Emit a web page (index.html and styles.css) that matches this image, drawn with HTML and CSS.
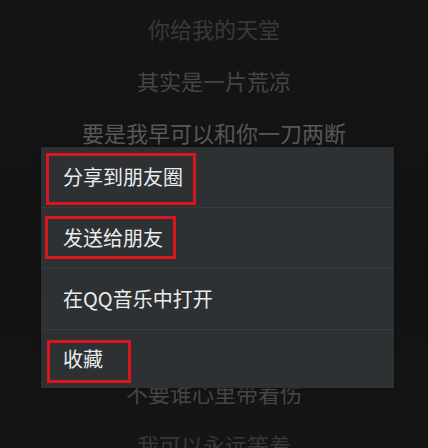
FILE: index.html
```html
<!DOCTYPE html>
<html lang="zh-CN">
<head>
<meta charset="utf-8">
<title>歌词</title>
<link rel="stylesheet" href="styles.css">
</head>
<body>
<div class="screen">
  <div class="lyrics">
    <p class="line l1">你给我的天堂</p>
    <p class="line l2">其实是一片荒凉</p>
    <p class="line l3">要是我早可以和你一刀两断</p>
    <div class="gap"></div>
    <p class="line l4">不要谁心里带着伤</p>
    <p class="line l5">我可以永远等着</p>
  </div>
  <div class="menu">
    <div class="item">分享到朋友圈<span class="mark mark-1"></span></div>
    <div class="item">发送给朋友<span class="mark mark-2"></span></div>
    <div class="item">在QQ音乐中打开</div>
    <div class="item last">收藏<span class="mark mark-4"></span></div>
  </div>
</div>
</body>
</html>
```
FILE: styles.css
```css
html, body {
  margin: 0;
  padding: 0;
}
body {
  width: 428px;
  height: 448px;
  overflow: hidden;
  background: #131313;
  font-family: "Noto Sans CJK SC", "Noto Sans", sans-serif;
}
.screen {
  position: relative;
  width: 428px;
  height: 448px;
  overflow: hidden;
  background: linear-gradient(180deg, #151515 0%, #121212 60%, #151514 100%);
}
.lyrics {
  padding-top: 2px;
  text-align: center;
}
.gap {
  height: 208px;
}
.line {
  margin: 0;
  height: 52px;
  line-height: 52px;
  font-size: 22px;
  color: #4a4a4a;
  white-space: nowrap;
}
.l1 { color: #393939; }
.l2 { color: #454545; }
.l3 { color: #575757; }
.l4 { color: #464646; }
.l5 { color: #383838; }

.menu {
  position: absolute;
  left: 41px;
  top: 147px;
  width: 353px;
  background: #2e3133;
  box-shadow: 0 0 2px rgba(0,0,0,0.6);
}
.item {
  position: relative;
  height: 60px;
  line-height: 60px;
  padding-left: 22px;
  font-size: 20px;
  color: #ebebeb;
  border-top: 1px solid #383b3d;
}
.item:first-child {
  border-top: none;
}
.item.last {
  height: 58px;
  line-height: 58px;
}
.mark {
  position: absolute;
  border: 3px solid #d9161e;
  box-sizing: border-box;
}
.mark-1 { left: 5px; top: 6px; width: 150px; height: 52px; }
.mark-2 { left: 4px; top: 8px; width: 131px; height: 43px; }
.mark-4 { left: 6px; top: 10px; width: 84px; height: 43px; }
```
